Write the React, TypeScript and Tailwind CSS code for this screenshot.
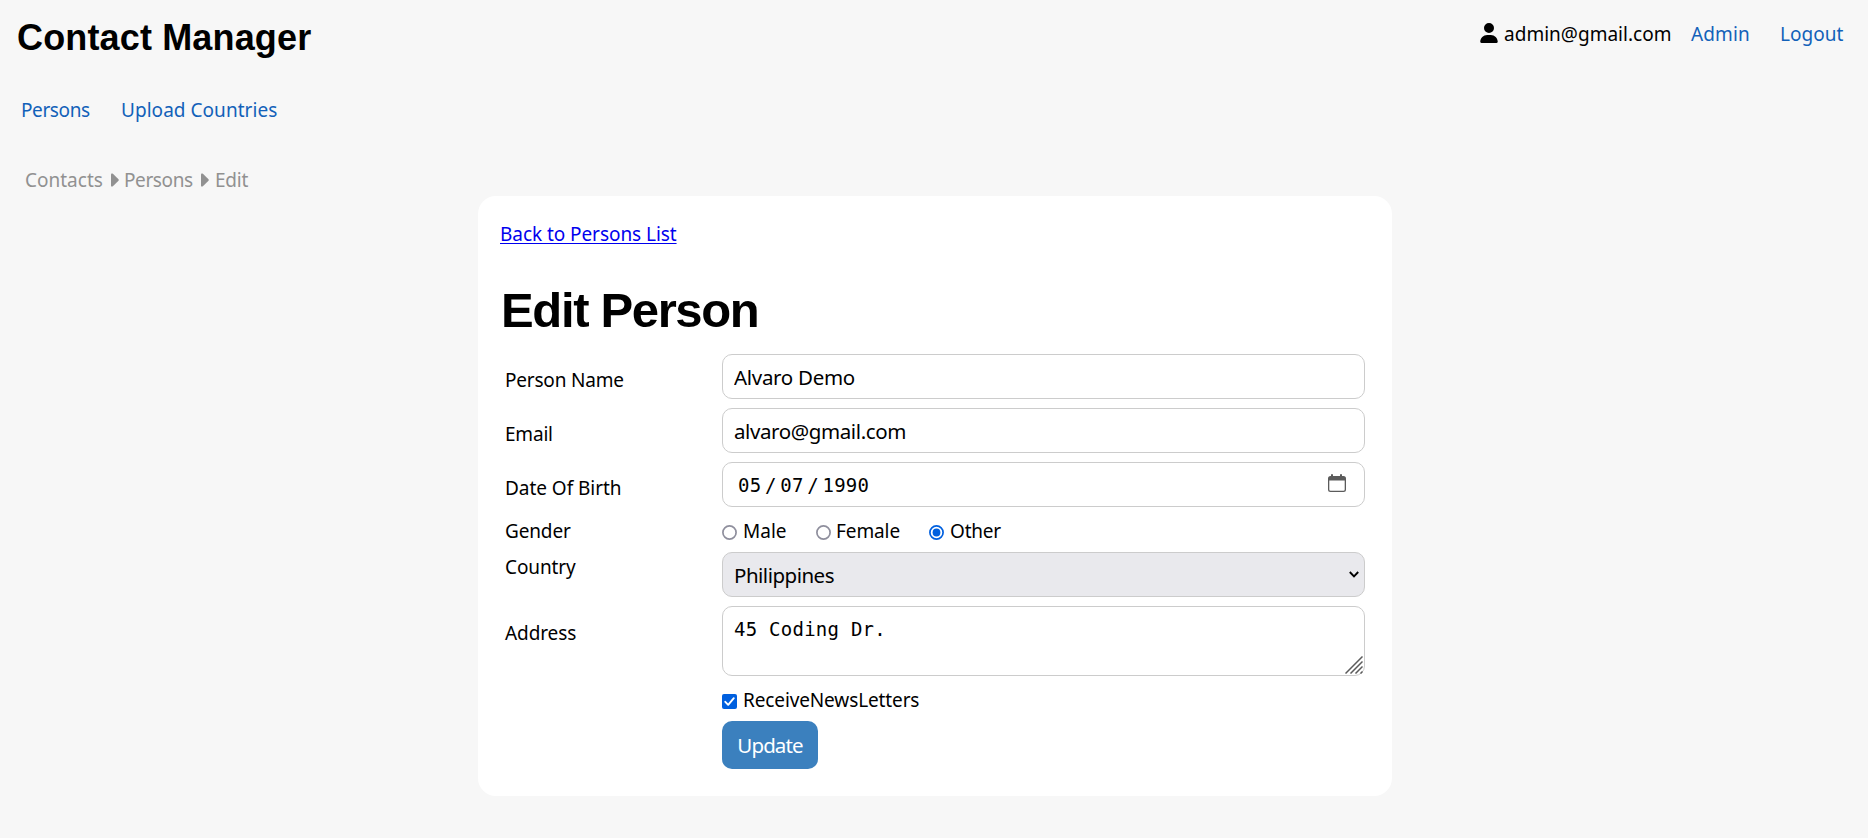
import type { ReactNode } from "react";
import { FaUser } from "react-icons/fa6";

const field =
  "block h-[45px] w-[643px] rounded-[10px] border border-[#cccccc] bg-white pl-[11px] text-[20.5px] text-black outline-none";

function Caret() {
  return (
    <svg width="8" height="14" viewBox="0 0 8 14" fill="#919191" className="mt-[5px] shrink-0">
      <path d="M0 1.6C0 .4 1 0 1.900.8L7.500 6.300c.4.4.4 1 0 1.400L1.900 13.200C1 14 0 13.600 0 12.400Z" />
    </svg>
  );
}

function Radio({ checked }: { checked?: boolean }) {
  return (
    <svg width="15" height="15" viewBox="0 0 15 15" fill="none" className="mt-[6px] shrink-0">
      <circle cx="7.5" cy="7.5" r="6.600" strokeWidth="1.700" fill="#fff" stroke={checked ? "#0060df" : "#8f8f9d"} />
      {checked && <circle cx="7.5" cy="7.5" r="3.900" fill="#0060df" />}
    </svg>
  );
}

function Row({ label, className, labelClass, children }: { label?: string; className: string; labelClass?: string; children: ReactNode }) {
  return (
    <div className={`flex items-start ${className}`}>
      <div className={`w-[217px] shrink-0 whitespace-nowrap leading-6 ${labelClass ?? ""}`}>{label}</div>
      {children}
    </div>
  );
}

export default function App() {
  return (
    <div className="flex h-[838px] w-full flex-col overflow-hidden bg-[#f7f7f7] font-['Noto_Sans',sans-serif] text-[19px] leading-6 text-black">
      <header className="flex h-[98px] shrink-0 justify-between pl-[17px] whitespace-nowrap">
        <h1 className="pt-[18px] font-['Liberation_Sans',sans-serif] text-[36px] leading-10 font-bold tracking-[0.15px]">Contact Manager</h1>
        <div className="flex pt-[22px]">
          <FaUser className="mt-px mr-[6px] h-5 w-[18px]" />
          <span className="w-[187px] tracking-[0.02px]">admin@gmail.com</span>
          <a className="w-[89px] tracking-[0.1px] text-[#1261b9]">Admin</a>
          <a className="w-[88px] tracking-[0.05px] text-[#1261b9]">Logout</a>
        </div>
      </header>
      <nav className="flex h-[70px] shrink-0 pl-[21px] whitespace-nowrap text-[#1261b9]">
        <a className="w-[100px] tracking-[-0.4px]">Persons</a>
        <a className="tracking-[0.04px]">Upload Countries</a>
      </nav>
      <div className="flex h-7 shrink-0 pl-[25px] whitespace-nowrap text-[#919191]">
        <span className="w-[86px] tracking-[0px]">Contacts</span>
        <Caret />
        <span className="ml-[5px] w-[77px] tracking-[-0.4px]">Persons</span>
        <Caret />
        <span className="ml-[6px] tracking-[-0.2px]">Edit</span>
      </div>
      <main className="ml-[478px] flex h-[600px] w-[914px] shrink-0 flex-col rounded-[18px] bg-white pl-[22px]">
        <div className="h-[84px] pt-[26px]">
          <a className="text-[#0000ee] tracking-[-0.06px] underline decoration-1 underline-offset-[2px]">Back to Persons List</a>
        </div>
        <h2 className="h-[74px] pl-px font-['Liberation_Sans',sans-serif] text-[49px] leading-[60px] font-bold tracking-[-1.35px]">Edit Person</h2>
        <form className="pl-[5px]">
          <Row label="Person Name" className="h-[54px]" labelClass="pt-[14px] tracking-[-0.2px]">
            <input className={`${field} tracking-[-0.3px]`} defaultValue="Alvaro Demo" />
          </Row>
          <Row label="Email" className="h-[54px]" labelClass="pt-[14px] tracking-[-0.2px]">
            <input className={`${field} tracking-[-0.4px]`} defaultValue="alvaro@gmail.com" />
          </Row>
          <Row label="Date Of Birth" className="h-[55px]" labelClass="pt-[14px] tracking-[-0.04px]">
            <div className="flex h-[45px] w-[643px] items-center rounded-[10px] border border-[#cccccc] pl-[15px] font-['DejaVu_Sans_Mono',monospace] text-[19px] tracking-[0.2px]">
              <span>05</span>
              <span className="w-[19px] text-center">/</span>
              <span>07</span>
              <span className="w-[19px] text-center">/</span>
              <span>1990</span>
              <svg width="18" height="19" viewBox="0 0 18 19" fill="#5b5b5b" className="mr-[18px] mb-[2px] ml-auto">
                <path fillRule="evenodd" d="M3 1a1 1 0 0 1 2 0v1h7V1a1 1 0 0 1 2 0v1h1.500A2.500 2.500 0 0 1 18 4.500v11a2.500 2.500 0 0 1-2.500 2.500h-13A2.500 2.500 0 0 1 0 15.500v-11A2.500 2.500 0 0 1 2.500 2H3ZM1.300 6.500v9a1.200 1.200 0 0 0 1.200 1.200h13a1.200 1.200 0 0 0 1.200-1.200v-9Z" />
              </svg>
            </div>
          </Row>
          <Row label="Gender" className="h-[35px]" labelClass="pt-[2px] tracking-[-0.15px]">
            <div className="flex pt-[2px] whitespace-nowrap">
              <Radio />
              <span className="ml-[6px] w-[73px] tracking-[0px]">Male</span>
              <Radio />
              <span className="ml-[5px] w-[93px] tracking-[-0.1px]">Female</span>
              <Radio checked />
              <span className="ml-[6px] tracking-[-0.2px]">Other</span>
            </div>
          </Row>
          <Row label="Country" className="h-[54px]" labelClass="pt-[3px] tracking-[-0.1px]">
            <div className="flex h-[45px] w-[643px] items-center rounded-[10px] border border-[#cccccc] bg-[#e9e9ed] pl-[11px] text-[20.5px] tracking-[-0.5px]">
              <span>Philippines</span>
              <svg width="10" height="7" viewBox="0 0 10 7" fill="none" stroke="#000" strokeWidth="1.900" className="mr-[5px] ml-auto">
                <path d="M.8 1 5 5.300 9.200 1" />
              </svg>
            </div>
          </Row>
          <Row label="Address" className="h-[84px]" labelClass="pt-[15px] tracking-[-0.1px]">
            <div className="flex h-[70px] w-[643px] items-start justify-between rounded-[10px] border border-[#cccccc] pt-[10px] pl-[11px] font-['DejaVu_Sans_Mono',monospace] text-[19px] tracking-[0.25px]">
              <span>45 Coding Dr.</span>
              <svg width="18" height="18" viewBox="0 0 18 18" fill="none" stroke="#5b5b5b" strokeWidth="1.500" className="mr-px mb-px self-end">
                <path d="M.5 17.500 17.500.5M5.500 17.500 17.500 5.500M10.500 17.500l7-7M15.500 17.500l2-2" />
              </svg>
            </div>
          </Row>
          <Row className="h-[31px]">
            <div className="flex">
              <svg width="15" height="15" viewBox="0 0 15 15" className="mt-1 mr-[6px]">
                <rect width="15" height="15" rx="2" fill="#0060df" />
                <path d="m3.300 7.800 2.900 3L11.800 4.200" fill="none" stroke="#fff" strokeWidth="1.900" strokeLinecap="round" strokeLinejoin="round" />
              </svg>
              <span className="mt-[-2px] tracking-[-0.12px]">ReceiveNewsLetters</span>
            </div>
          </Row>
          <Row className="h-12">
            <button type="button" className="h-12 w-24 rounded-[10px] bg-[#3b80be] text-[20.5px] tracking-[-0.9px] text-white">Update</button>
          </Row>
        </form>
      </main>
    </div>
  );
}
